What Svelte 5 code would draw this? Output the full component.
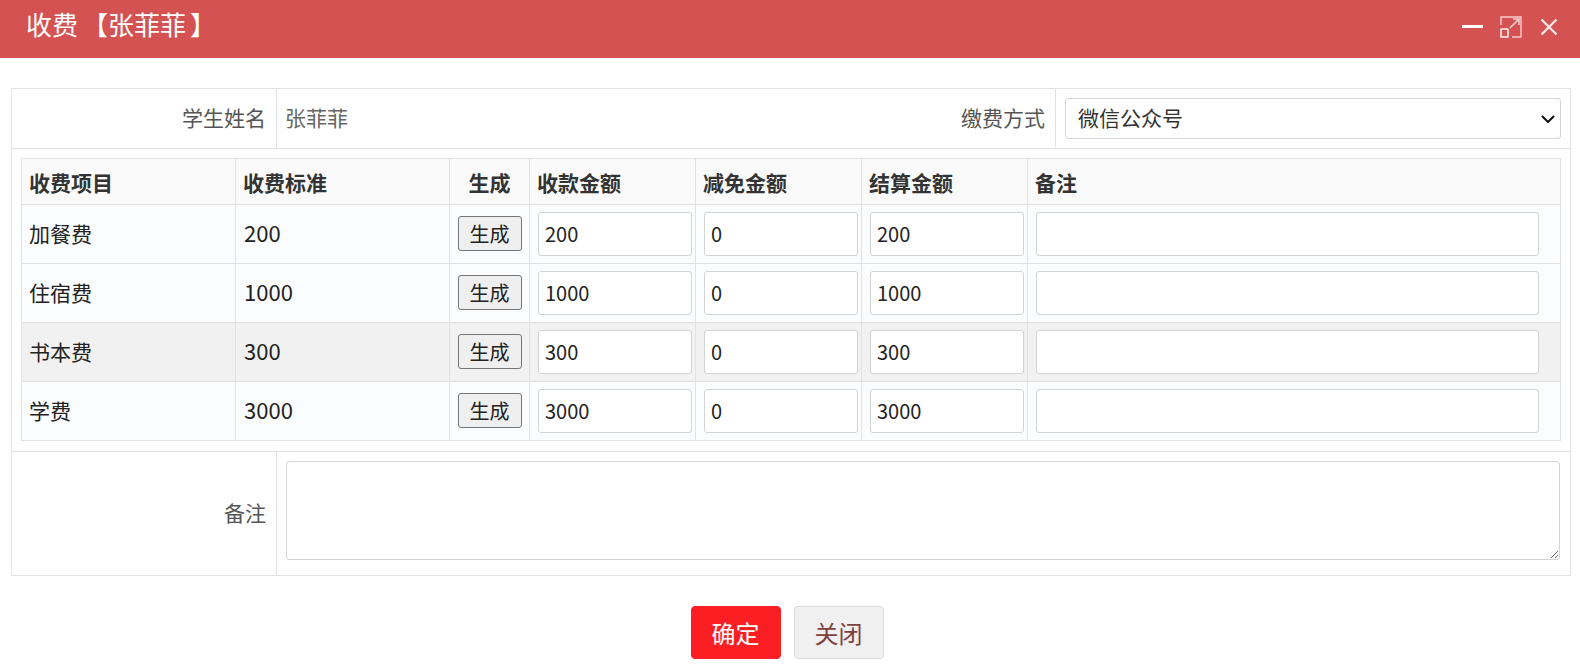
<script>
  const rows = [
    { name: '加餐费', std: '200', cls: '' },
    { name: '住宿费', std: '1000', cls: '' },
    { name: '书本费', std: '300', cls: 'hover' },
    { name: '学费', std: '3000', cls: '' }
  ];
</script>

<div class="dialog">
  <header class="bar">
    <h1>收费<span class="br">【</span>张菲菲<span class="br">】</span></h1>
    <div class="tools">
      <svg width="21" height="22" viewBox="0 0 21 22"><rect x="0" y="9" width="21" height="3" fill="#fff"/></svg>
      <svg width="22" height="22" viewBox="0 0 22 22" fill="none" stroke="#fff" stroke-opacity=".72" stroke-width="1.4"><path d="M1 9V1h20v20h-9"/><rect x="1" y="13" width="7" height="8" rx=".5" stroke-width="2"/><path d="M10 12l9-9M13 3h6v6" stroke-width="1.6"/></svg>
      <svg width="20" height="20" viewBox="0 0 20 20" stroke="#fff" stroke-opacity=".85" stroke-width="2.4"><path d="M2.5 2.5l15 15M17.5 2.5l-15 15"/></svg>
    </div>
  </header>

  <main class="body">
    <div class="form">
      <div class="line top">
        <div class="label">学生姓名</div>
        <div class="value name">张菲菲</div>
        <div class="label pay">缴费方式</div>
        <div class="value sel">
          <div class="select-wrap">
            <select><option>微信公众号</option></select>
            <svg class="chev" width="14" height="8" viewBox="0 0 14 8" fill="none" stroke="#111" stroke-width="2"><path d="M1 1l6 6 6-6"/></svg>
          </div>
        </div>
      </div>
      <div class="inner">
        <table>
          <colgroup>
            <col style="width:214px" /><col style="width:214px" /><col style="width:80px" />
            <col style="width:166px" /><col style="width:166px" /><col style="width:166px" /><col />
          </colgroup>
          <thead>
            <tr>
              <th>收费项目</th><th>收费标准</th><th class="c">生成</th>
              <th>收款金额</th><th>减免金额</th><th>结算金额</th><th>备注</th>
            </tr>
          </thead>
          <tbody>
            {#each rows as r}
              <tr class={r.cls}>
                <td>{r.name}</td>
                <td class="num">{r.std}</td>
                <td class="c"><button type="button">生成</button></td>
                <td class="f"><input value={r.std} /></td>
                <td class="f"><input value="0" /></td>
                <td class="f"><input value={r.std} /></td>
                <td class="f"><input class="wide" /></td>
              </tr>
            {/each}
          </tbody>
        </table>
      </div>
      <div class="line bottom">
        <div class="label">备注</div>
        <div class="value area"><textarea></textarea></div>
      </div>
    </div>
  </main>

  <footer class="actions">
    <button type="button" class="ok">确定</button>
    <button type="button" class="close">关闭</button>
  </footer>
</div>

<style>
  :global(body) {
    margin: 0;
    background: #fff;
    font-family: "Noto Sans CJK SC", "Noto Sans", sans-serif;
  }
  .dialog { width: 1580px; height: 669px; overflow: hidden; }
  .bar {
    height: 58px;
    background: #d45252;
    display: flex;
    align-items: center;
    justify-content: space-between;
    padding: 0 21px 0 26px;
    box-sizing: border-box;
  }
  h1 { margin: 0 0 10px; font-size: 26px; font-weight: 400; line-height: 44px; color: #fff; }
  .br { margin-left: 4px; }
  .tools { display: flex; align-items: center; gap: 17px; margin-bottom: 4px; }
  .body { padding: 30px 9px 0 11px; }
  .form { border: 1px solid #e2e2e2; box-sizing: border-box; height: 488px; }
  .line { display: flex; }
  .top { height: 59px; border-bottom: 1px solid #e2e2e2; }
  .label {
    font-size: 21px;
    color: #555;
    display: flex;
    align-items: center;
    justify-content: flex-end;
    padding: 0 10px 4px 0;
    box-sizing: border-box;
    width: 265px;
    border-right: 1px solid #e2e2e2;
    height: 100%;
  }
  .value { display: flex; align-items: center; font-size: 21px; color: #666; box-sizing: border-box; }
  .name { padding: 0 0 4px 8px; width: 666px; }
  .pay { width: 113px; }
  .sel { padding-left: 9px; }
  .select-wrap { position: relative; display: flex; }
  .chev { position: absolute; right: 6px; top: 17px; pointer-events: none; }
  select {
    appearance: none;
    width: 496px;
    height: 41px;
    font: inherit;
    color: #333;
    padding: 0 0 3px 12px;
    background: #fff;
    border: 1px solid #d4d4d4;
    border-radius: 3px;
  }
  .inner { padding: 9px 9px 10px 9px; height: 283px; border-bottom: 1px solid #e2e2e2; }
  table {
    width: 1540px;
    table-layout: fixed;
    border-collapse: collapse;
    font-size: 21px;
    color: #222;
  }
  th, td { border: 1px solid #e2e2e2; padding: 0 7px; text-align: left; box-sizing: border-box; line-height: 28px; }
  th { height: 46px; background: #fafafa; color: #333; font-weight: 700; }
  td { height: 59px; background: #fbfcfe; padding-bottom: 2px; }
  td.num { font-size: 22px; padding: 0 8px 4px; }
  .hover td { background: #f1f1f1; }
  .c { text-align: center; padding: 0 0 2px; }
  th.c { padding: 0; }
  td.f { padding: 0 8px; }
  button { font-family: inherit; }
  td button {
    width: 64px;
    height: 35px;
    padding: 2px 0 0;
    font-size: 20px;
    line-height: 1;
    color: #222;
    background: #efefef;
    border: 1px solid #767676;
    border-radius: 3px;
  }
  td input {
    width: 154px;
    height: 44px;
    padding: 0 6px 2px;
    box-sizing: border-box;
    font: inherit;
    font-size: 20px;
    color: #222;
    background: #fff;
    border: 1px solid #d4d4d4;
    border-radius: 3px;
    display: block;
  }
  td input.wide { width: 503px; }
  .bottom { height: 124px; }
  .area { padding: 9px 0 0 9px; align-items: flex-start; }
  textarea {
    display: block;
    width: 1274px;
    height: 99px;
    box-sizing: border-box;
    background: #fff;
    border: 1px solid #d4d4d4;
    border-radius: 3px;
  }
  .actions { display: flex; justify-content: center; gap: 13px; padding: 30px 6px 0 0; }
  .actions button {
    width: 90px;
    height: 53px;
    border-radius: 4px;
    font-size: 24px;
    line-height: 1;
    padding: 0;
  }
  .ok { background: #fb1f24; color: #fff; border: 1px solid #fb1f24; }
  .close { background: #f0f0f0; color: #7f3f3f; border: 1px solid #dcdcdc; }
</style>
